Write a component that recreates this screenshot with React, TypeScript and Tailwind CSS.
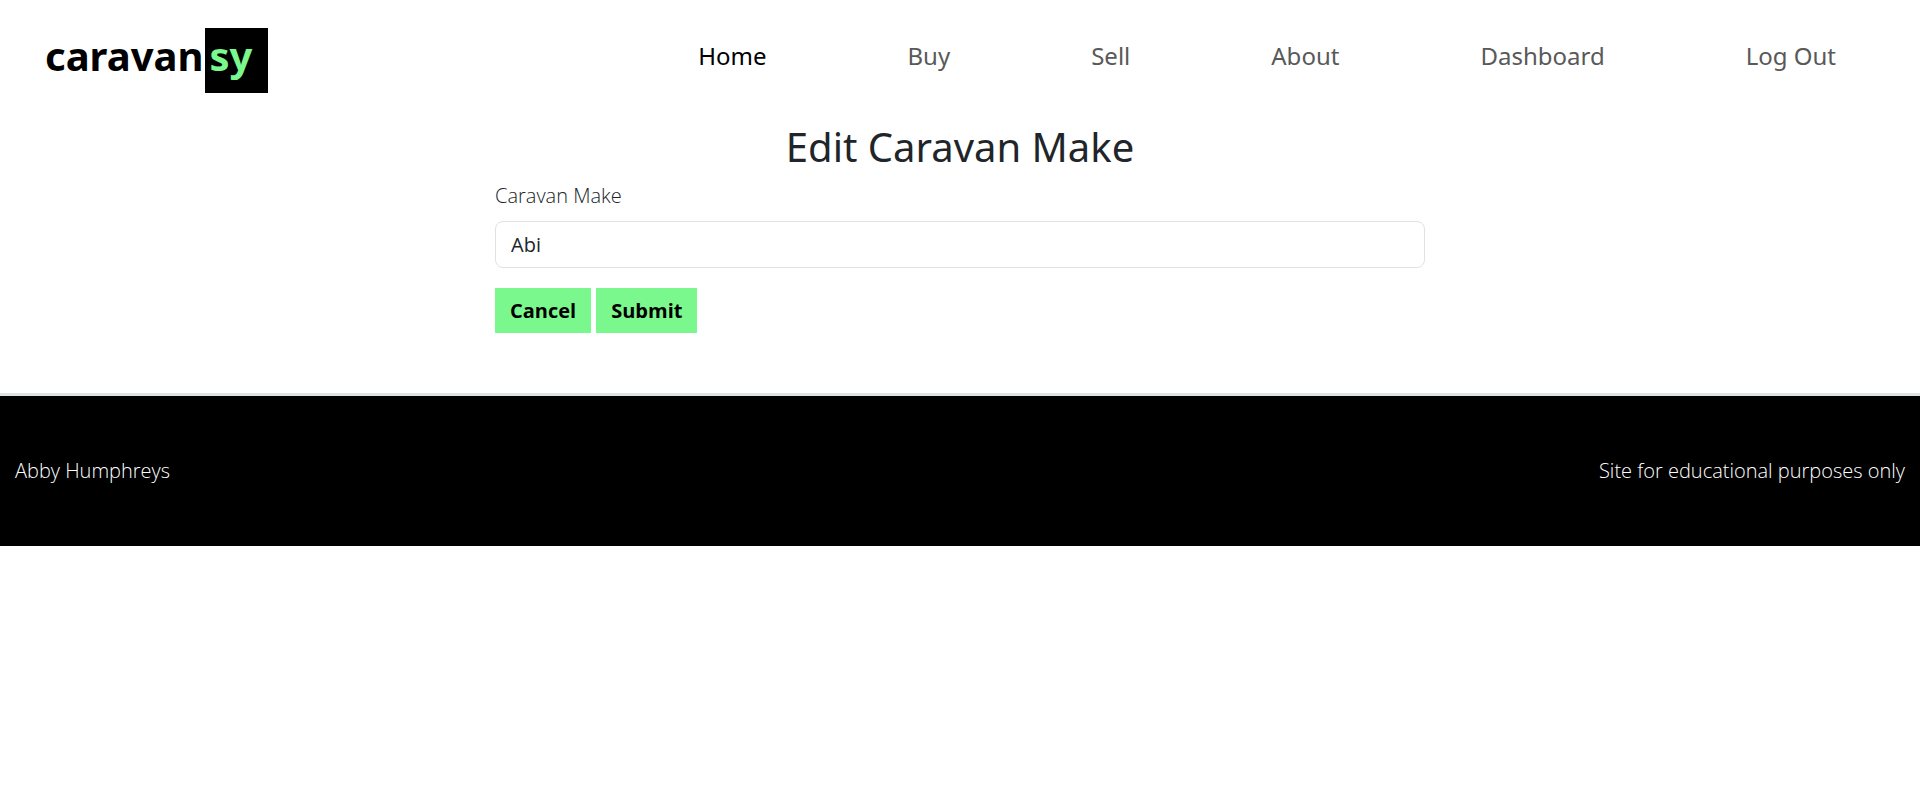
import { useState } from "react";

const links = ["Home", "Buy", "Sell", "About", "Dashboard", "Log Out"];

function Header() {
  return (
    <header className="flex flex-wrap items-start justify-between gap-x-8 pt-7 pr-[84px] pl-[45px] font-['Noto_Sans',sans-serif]">
      <a href="#home" className="flex items-start text-[40px] leading-[56px] font-bold text-black">
        <span className="pr-0.5">caravan</span>
        <span className="bg-black pr-4 pb-[9px] pl-1 text-[#7bf88d]">sy</span>
      </a>
      <nav aria-label="Main" className="pt-3">
        <ul className="flex flex-wrap gap-x-[141px] text-2xl">
          {links.map((link) => (
            <li key={link}>
              <a
                href={`#${link.toLowerCase().replace(" ", "-")}`}
                aria-current={link === "Home" ? "page" : undefined}
                className={link === "Home" ? "text-black" : "text-[#595959]"}
              >
                {link}
              </a>
            </li>
          ))}
        </ul>
      </nav>
    </header>
  );
}

function EditMakeForm() {
  const [make, setMake] = useState("Abi");
  return (
    <main className="mx-auto w-full max-w-[954px] px-3 pt-[30px] pb-[60px]">
      <h1 className="text-center font-['Noto_Sans',sans-serif] text-[40px] leading-[48px]">
        Edit Caravan Make
      </h1>
      <form onSubmit={(event) => event.preventDefault()}>
        <label htmlFor="make" className="mt-[10px] mb-[10px] block leading-[30px] font-light">
          Caravan Make
        </label>
        <input
          id="make"
          type="text"
          value={make}
          onChange={(event) => setMake(event.target.value)}
          className="block h-[47px] w-full rounded-lg border border-[#dee2e6] bg-white px-[15px]"
        />
        <div className="mt-5 flex gap-[5px] font-bold text-black">
          <button type="button" className="h-[45px] bg-[#7bf88d] px-[15px]">
            Cancel
          </button>
          <button type="submit" className="h-[45px] bg-[#7bf88d] px-[15px]">
            Submit
          </button>
        </div>
      </form>
    </main>
  );
}

function Footer() {
  return (
    <footer className="flex flex-wrap justify-between gap-4 border-t-[3px] border-[#dee2e2] bg-black px-[15px] py-[60px] leading-[30px] font-light text-white">
      <p>Abby Humphreys</p>
      <p>Site for educational purposes only</p>
    </footer>
  );
}

export default function App() {
  return (
    <div className="min-h-screen bg-white font-['Open_Sans',sans-serif] text-xl text-[#212529]">
      <Header />
      <EditMakeForm />
      <Footer />
    </div>
  );
}
